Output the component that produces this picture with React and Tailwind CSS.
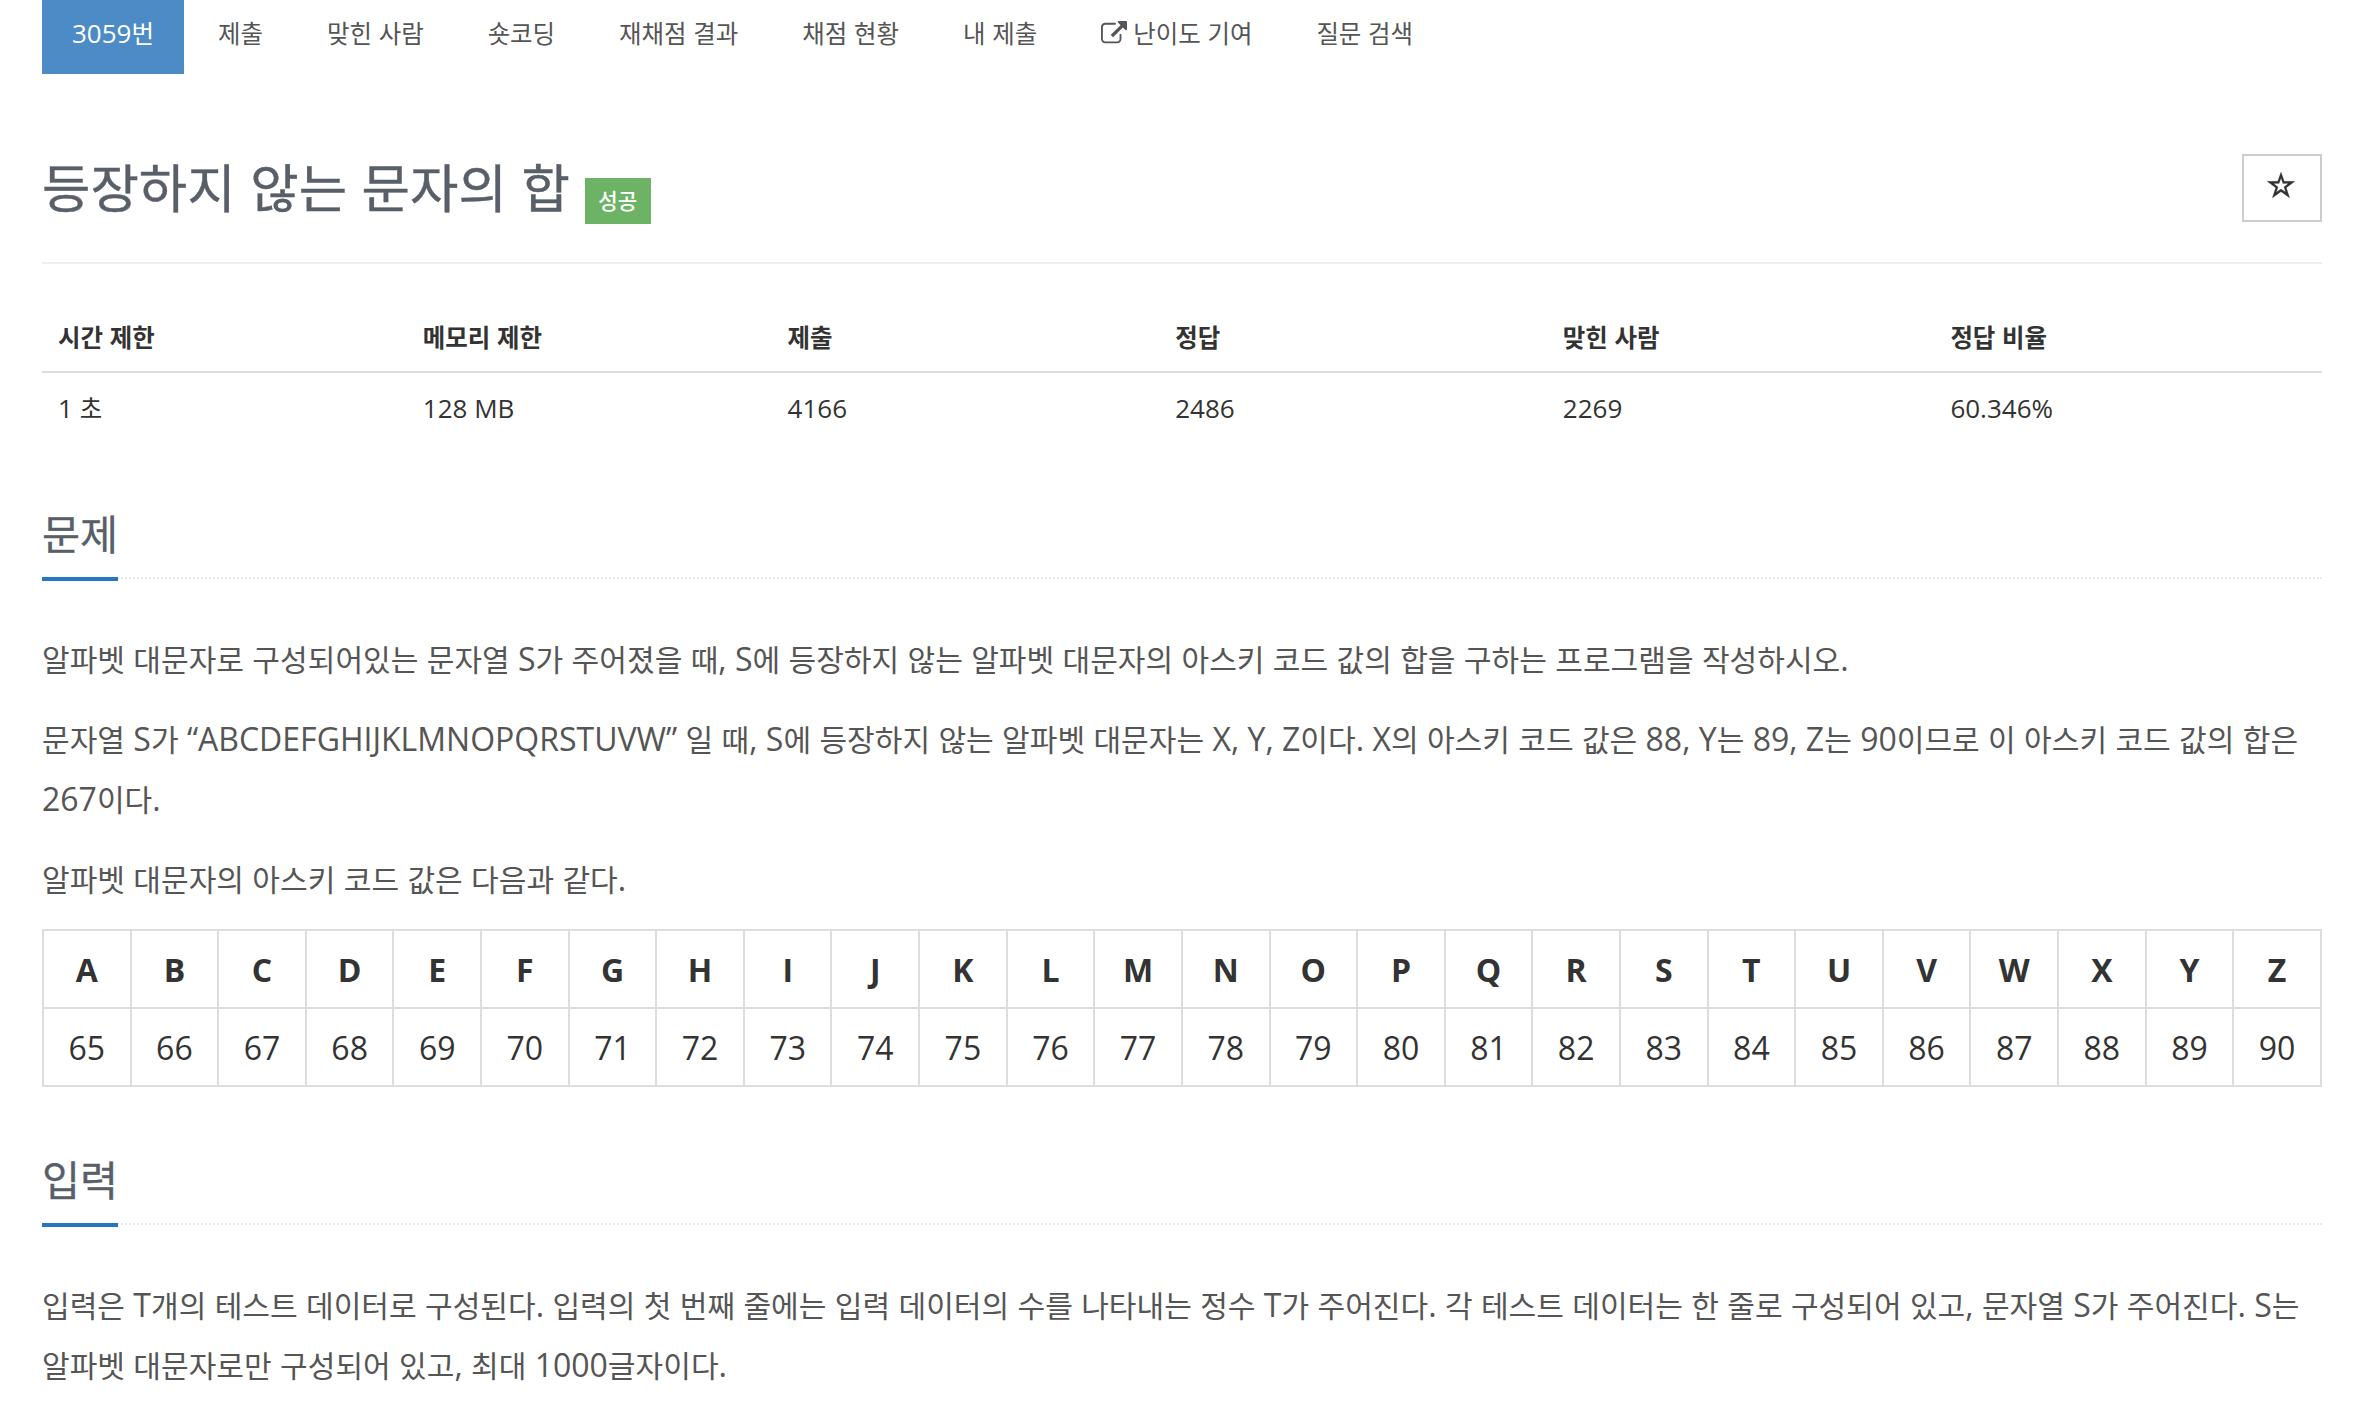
import React from "react";

const MENU = [
  { label: "제출" },
  { label: "맞힌 사람" },
  { label: "숏코딩" },
  { label: "재채점 결과" },
  { label: "채점 현황" },
  { label: "내 제출" },
  { label: "난이도 기여", external: true },
  { label: "질문 검색" },
];

const INFO = [
  { name: "시간 제한", value: "1 초", width: "w-[16%]" },
  { name: "메모리 제한", value: "128 MB", width: "w-[16%]" },
  { name: "제출", value: "4166", width: "w-[17%]" },
  { name: "정답", value: "2486", width: "w-[17%]" },
  { name: "맞힌 사람", value: "2269", width: "w-[17%]" },
  { name: "정답 비율", value: "60.346%", width: "w-[17%]" },
];

const LETTERS = "ABCDEFGHIJKLMNOPQRSTUVWXYZ".split("");

// Hangul is set a little smaller than the latin text around it
function Ko({ children }) {
  return children.split(/([가-힣]+)/).map((part, i) =>
    /[가-힣]/.test(part) ? (
      <span key={i} className="text-[0.94em] leading-none">
        {part}
      </span>
    ) : (
      part
    )
  );
}

function ExternalLinkIcon() {
  return (
    <svg
      viewBox="0 0 1792 1792"
      className="inline-block size-[26px] mr-1.5 align-[-4px]"
      fill="currentColor"
    >
      <path d="M1408 928v320q0 119-84.500 203.500t-203.500 84.500h-832q-119 0-203.500-84.500t-84.500-203.500v-832q0-119 84.500-203.500t203.500-84.500h704q14 0 23 9t9 23v64q0 14-9 23t-23 9h-704q-66 0-113 47t-47 113v832q0 66 47 113t113 47h832q66 0 113-47t47-113v-320q0-14 9-23t23-9h64q14 0 23 9t9 23zm384-864v512q0 26-19 45t-45 19-45-19l-176-176-652 652q-10 10-23 10t-23-10l-114-114q-10-10-10-23t10-23l652-652-176-176q-19-19-19-45t19-45 45-19h512q26 0 45 19t19 45z" />
    </svg>
  );
}

function StarIcon() {
  return (
    <svg viewBox="0 0 28 26" className="w-7 h-[26px] mr-0.5" fill="#333">
      <path
        fillRule="evenodd"
        stroke="#333"
        strokeWidth="0.2"
        d="M14 0L17.300 9.300H28L19.400 15.800L22.700 26L14 19.800L5.300 26L8.600 15.800L0 9.300H10.700ZM14 6.300L15.900 11.600H21.300L16.900 14.900L18.600 20.100L14 17L9.400 20.100L11.100 14.900L6.700 11.600H12.100Z"
      />
    </svg>
  );
}

function Section({ title, children }) {
  return (
    <section>
      <div className="border-b-2 border-dotted border-[#e4e9f0] h-[82px] flex">
        <h2 className="h-[84px] border-b-4 border-[#2277c0] text-[44px] leading-[66px] pt-[3px] text-[#585f69] [-webkit-text-stroke:0.3px]">
          <Ko>{title}</Ko>
        </h2>
      </div>
      <div className="mt-[50px] flex flex-col gap-5 text-[32px] leading-[60px] text-[#555] whitespace-nowrap">
        {children}
      </div>
    </section>
  );
}

export default function App() {
  return (
    <div className="w-full h-[1408px] overflow-hidden bg-white pl-[42px] pr-[38px] font-['Open_Sans','Noto_Sans_CJK_KR',sans-serif] text-[#333]">
      <nav className="flex gap-1 h-[74px] text-[26px] leading-[38px] text-[#555] whitespace-nowrap">
        <a className="bg-[#4c8bc6] text-white px-[30px] pt-3.5">
          <Ko>3059번</Ko>
        </a>
        {MENU.map((item) => (
          <a key={item.label} className="px-[30px] pt-3.5">
            {item.external && <ExternalLinkIcon />}
            <Ko>{item.label}</Ko>
          </a>
        ))}
      </nav>

      <header className="flex justify-between h-[190px] border-b-2 border-[#eee]">
        <div className="flex pt-[70px]">
          <h1 className="text-[56px] leading-[84px] text-[#585f69] whitespace-nowrap [-webkit-text-stroke:0.4px]">
            <Ko>등장하지 않는 문자의 합</Ko>
          </h1>
          <span className="ml-[15px] mt-[34px] h-[46px] px-[13.5px] bg-[#6db366] text-white text-[22.5px] leading-[46px] font-medium">
            <Ko>성공</Ko>
          </span>
        </div>
        <button className="mt-20 w-20 h-[68px] border-2 border-[#ccc] flex justify-center pt-4">
          <StarIcon />
        </button>
      </header>

      <table className="w-full table-fixed mt-[38px] text-[26px] leading-[38px] text-left">
        <thead>
          <tr className="h-[70px] border-b-2 border-[#ddd]">
            {INFO.map((col) => (
              <th key={col.name} className={`${col.width} px-4 font-bold`}>
                <Ko>{col.name}</Ko>
              </th>
            ))}
          </tr>
        </thead>
        <tbody>
          <tr className="h-[70px]">
            {INFO.map((col) => (
              <td key={col.name} className="px-4">
                <Ko>{col.value}</Ko>
              </td>
            ))}
          </tr>
        </tbody>
      </table>

      <div className="mt-[55px]">
        <Section title="문제">
          <p>
            <Ko>
              알파벳 대문자로 구성되어있는 문자열 S가 주어졌을 때, S에 등장하지 않는 알파벳 대문자의 아스키 코드 값의 합을 구하는 프로그램을 작성하시오.
            </Ko>
          </p>
          <p>
            <Ko>
              문자열 S가 “ABCDEFGHIJKLMNOPQRSTUVW” 일 때, S에 등장하지 않는 알파벳 대문자는 X, Y, Z이다. X의 아스키 코드 값은 88, Y는 89, Z는 90이므로 이 아스키 코드 값의 합은
            </Ko>
            <br />
            <Ko>267이다.</Ko>
          </p>
          <p>
            <Ko>알파벳 대문자의 아스키 코드 값은 다음과 같다.</Ko>
          </p>
          <table className="w-full table-fixed border-collapse text-center text-[#333]">
            <thead>
              <tr className="h-[78px]">
                {LETTERS.map((letter) => (
                  <th key={letter} className="border-2 border-[#ddd] pt-0.5 font-bold">
                    {letter}
                  </th>
                ))}
              </tr>
            </thead>
            <tbody>
              <tr className="h-[78px]">
                {LETTERS.map((letter) => (
                  <td key={letter} className="border-2 border-[#ddd] pt-0.5">
                    {letter.charCodeAt(0)}
                  </td>
                ))}
              </tr>
            </tbody>
          </table>
        </Section>
      </div>

      <div className="mt-[56px]">
        <Section title="입력">
          <p>
            <Ko>
              입력은 T개의 테스트 데이터로 구성된다. 입력의 첫 번째 줄에는 입력 데이터의 수를 나타내는 정수 T가 주어진다. 각 테스트 데이터는 한 줄로 구성되어 있고, 문자열 S가 주어진다. S는
            </Ko>
            <br />
            <Ko>알파벳 대문자로만 구성되어 있고, 최대 1000글자이다.</Ko>
          </p>
        </Section>
      </div>
    </div>
  );
}
